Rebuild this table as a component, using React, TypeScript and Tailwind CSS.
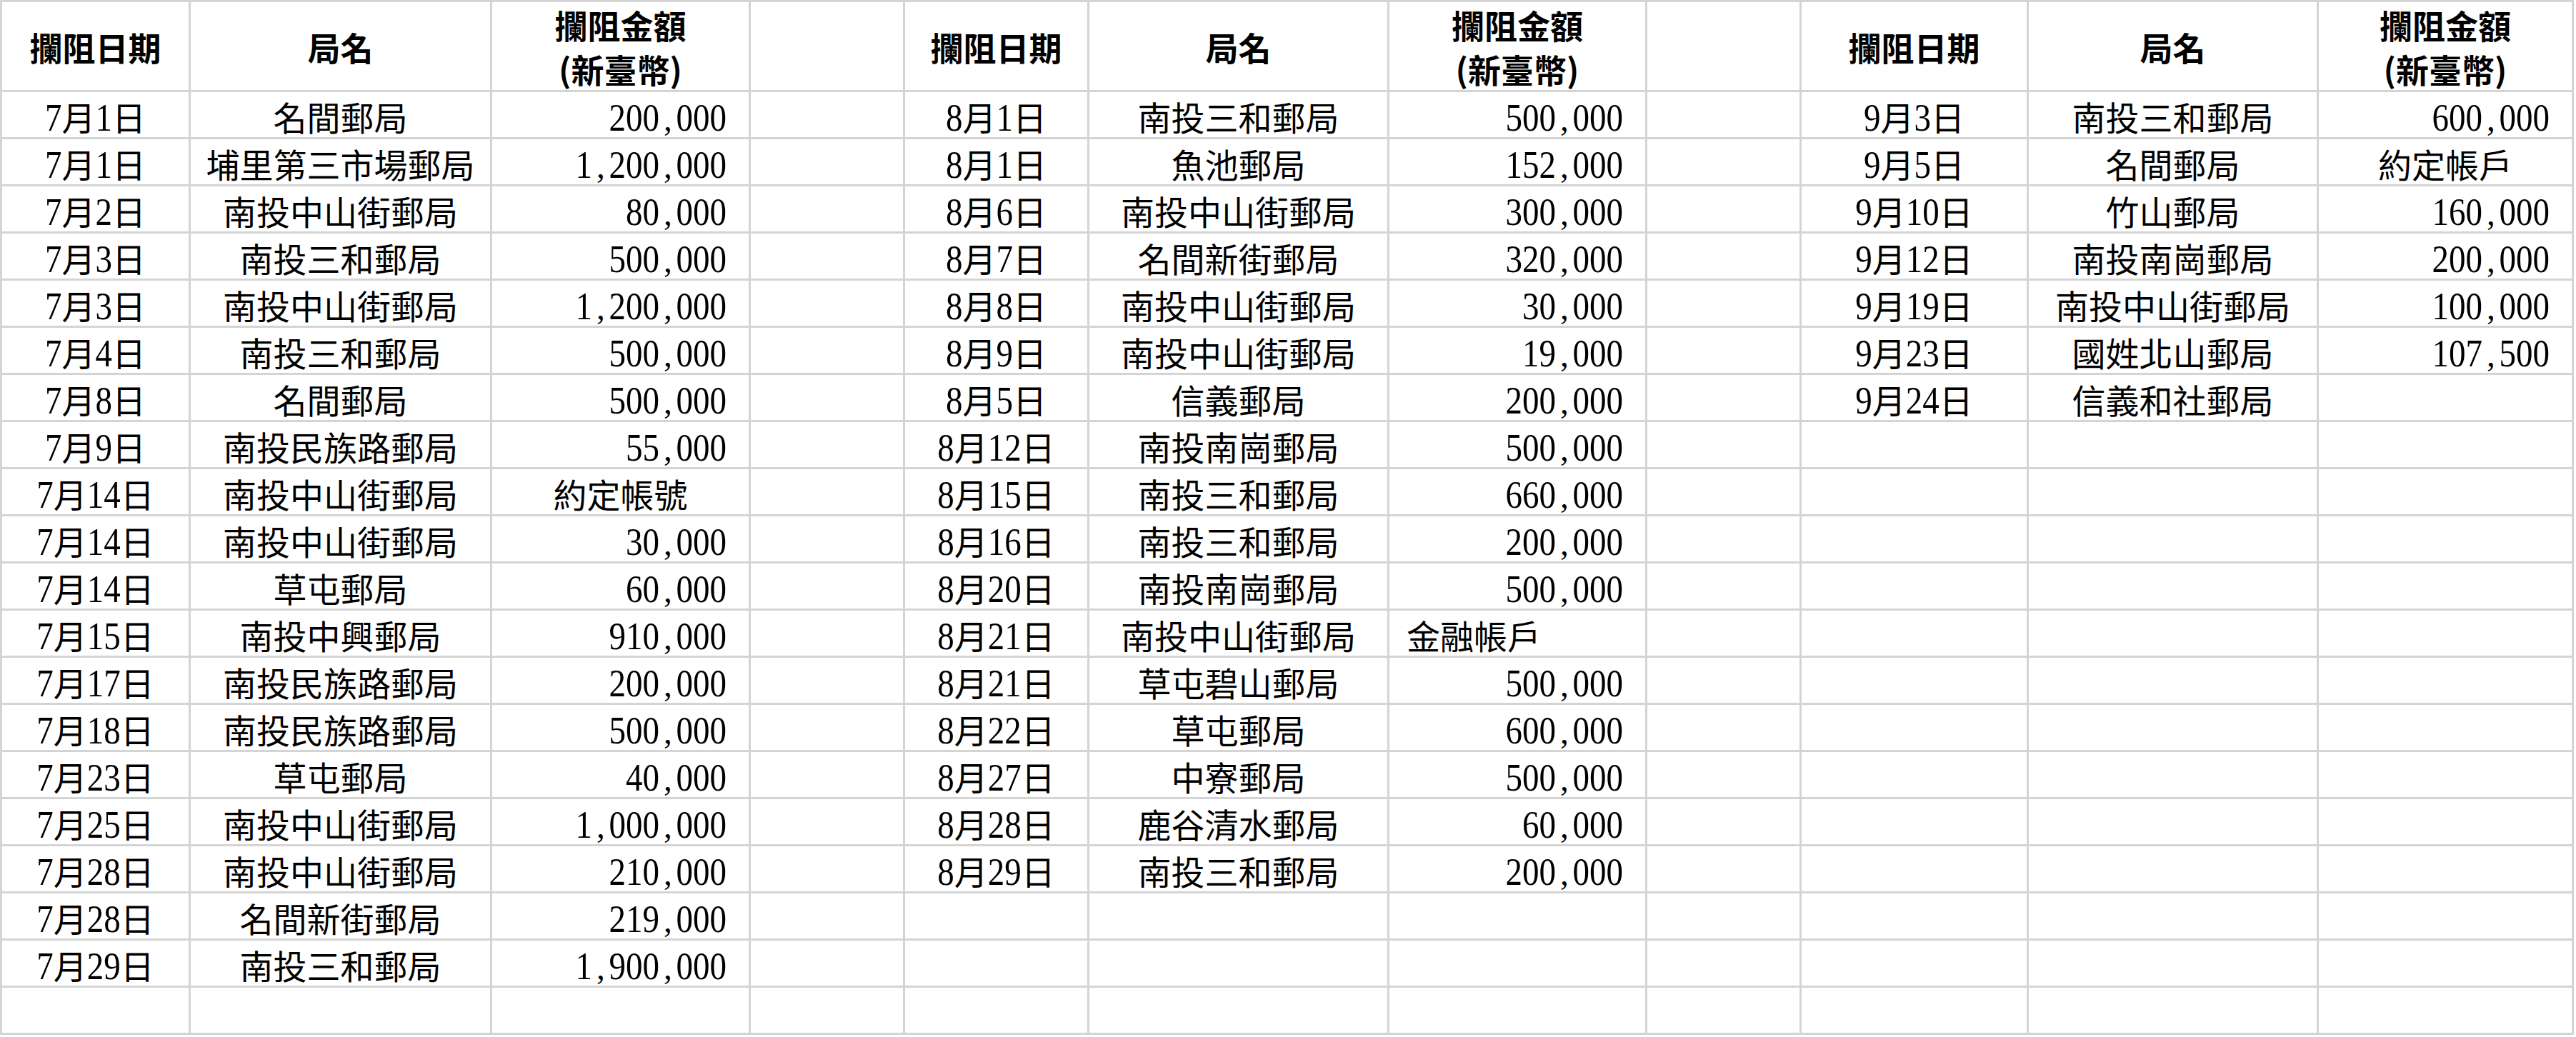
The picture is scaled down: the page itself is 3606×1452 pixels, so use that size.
type Entry = [string, string, string];

const july: Entry[] = [
  ['7月1日', '名間郵局', '200,000'],
  ['7月1日', '埔里第三市場郵局', '1,200,000'],
  ['7月2日', '南投中山街郵局', '80,000'],
  ['7月3日', '南投三和郵局', '500,000'],
  ['7月3日', '南投中山街郵局', '1,200,000'],
  ['7月4日', '南投三和郵局', '500,000'],
  ['7月8日', '名間郵局', '500,000'],
  ['7月9日', '南投民族路郵局', '55,000'],
  ['7月14日', '南投中山街郵局', '約定帳號'],
  ['7月14日', '南投中山街郵局', '30,000'],
  ['7月14日', '草屯郵局', '60,000'],
  ['7月15日', '南投中興郵局', '910,000'],
  ['7月17日', '南投民族路郵局', '200,000'],
  ['7月18日', '南投民族路郵局', '500,000'],
  ['7月23日', '草屯郵局', '40,000'],
  ['7月25日', '南投中山街郵局', '1,000,000'],
  ['7月28日', '南投中山街郵局', '210,000'],
  ['7月28日', '名間新街郵局', '219,000'],
  ['7月29日', '南投三和郵局', '1,900,000'],
];

const august: Entry[] = [
  ['8月1日', '南投三和郵局', '500,000'],
  ['8月1日', '魚池郵局', '152,000'],
  ['8月6日', '南投中山街郵局', '300,000'],
  ['8月7日', '名間新街郵局', '320,000'],
  ['8月8日', '南投中山街郵局', '30,000'],
  ['8月9日', '南投中山街郵局', '19,000'],
  ['8月5日', '信義郵局', '200,000'],
  ['8月12日', '南投南崗郵局', '500,000'],
  ['8月15日', '南投三和郵局', '660,000'],
  ['8月16日', '南投三和郵局', '200,000'],
  ['8月20日', '南投南崗郵局', '500,000'],
  ['8月21日', '南投中山街郵局', '金融帳戶'],
  ['8月21日', '草屯碧山郵局', '500,000'],
  ['8月22日', '草屯郵局', '600,000'],
  ['8月27日', '中寮郵局', '500,000'],
  ['8月28日', '鹿谷清水郵局', '60,000'],
  ['8月29日', '南投三和郵局', '200,000'],
];

const september: Entry[] = [
  ['9月3日', '南投三和郵局', '600,000'],
  ['9月5日', '名間郵局', '約定帳戶'],
  ['9月10日', '竹山郵局', '160,000'],
  ['9月12日', '南投南崗郵局', '200,000'],
  ['9月19日', '南投中山街郵局', '100,000'],
  ['9月23日', '國姓北山郵局', '107,500'],
  ['9月24日', '信義和社郵局', ''],
];

const groups = [july, august, september];
const ROWS = 20;

// digits in the sheet font are taller than Liberation Serif's, stretch them a bit
const Digits = ({ children }: { children: string }) => (
  <span className="inline-block origin-[50%_84%] scale-y-[1.16]">{children}</span>
);

const DateText = ({ value }: { value: string }) => (
  <span>
    {value.split(/(\d+)/).map((part, i) =>
      /^\d+$/.test(part) ? <Digits key={i}>{part}</Digits> : <span key={i}>{part}</span>,
    )}
  </span>
);

const Amount = ({ value }: { value: string }) => (
  <span>
    {value.split(',').map((part, i) => (
      <span key={i}>
        {i > 0 && <span className="inline-block w-[0.5em] text-center">,</span>}
        <Digits>{part}</Digits>
      </span>
    ))}
  </span>
);

const cell = 'bg-white flex items-end pb-[1px] leading-[47px] whitespace-nowrap';
const head =
  "bg-white flex items-center justify-center text-center font-['Noto_Sans_CJK_TC',sans-serif] font-bold text-[46px] leading-[62px]";

const App = () => {
  const cells = [];

  // header row
  groups.forEach((_, g) => {
    cells.push(
      <div key={`h${g}a`} className={head}>攔阻日期</div>,
      <div key={`h${g}b`} className={head}>局名</div>,
      <div key={`h${g}c`} className={head}>
        <div>
          攔阻金額
          <br />
          (新臺幣)
        </div>
      </div>,
    );
    if (g < 2) cells.push(<div key={`h${g}d`} className="bg-white" />);
  });

  for (let r = 0; r < ROWS; r++) {
    groups.forEach((rows, g) => {
      const [date, office, amount] = rows[r] ?? ['', '', ''];
      const isNumber = /^[\d,]+$/.test(amount);
      const amountAlign = isNumber
        ? 'justify-end pr-[31px]'
        : amount === '金融帳戶'
          ? 'justify-start pl-[24px]'
          : 'justify-center';
      cells.push(
        <div key={`${r}-${g}a`} className={`${cell} justify-center`}>
          <DateText value={date} />
        </div>,
        <div key={`${r}-${g}b`} className={`${cell} justify-center`}>{office}</div>,
        <div key={`${r}-${g}c`} className={`${cell} ${amountAlign}`}>
          {isNumber ? <Amount value={amount} /> : amount}
        </div>,
      );
      if (g < 2) cells.push(<div key={`${r}-${g}d`} className="bg-white" />);
    });
  }

  return (
    <div className="min-h-screen bg-white">
      <div className="grid w-fit grid-cols-[261px_419px_359px_213px_255px_417px_358px_213px_315px_403px_354px] grid-rows-[123px_repeat(20,63px)] gap-[3px] bg-[#d4d4d4] p-[3px] font-['Liberation_Serif','Noto_Sans_CJK_TC',serif] text-[47px] text-black">
        {cells}
      </div>
    </div>
  );
};

export default App;
